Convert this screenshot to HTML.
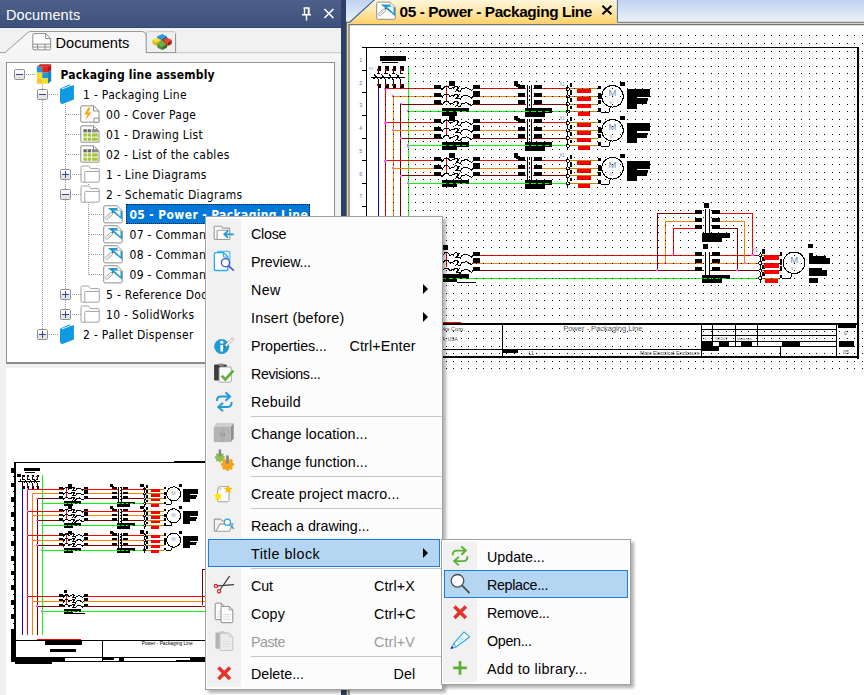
<!DOCTYPE html>
<html lang="en">
<head>
<meta charset="utf-8">
<title>Documents - 05 - Power - Packaging Line</title>
<style>
*{box-sizing:border-box;margin:0;padding:0}
html,body{width:864px;height:695px;overflow:hidden;background:#fff}
body{position:relative;font-family:"Liberation Sans",sans-serif;color:#000}
.abs{position:absolute}
/* ---------- left panel ---------- */
#left{left:0;top:0;width:341px;height:695px;background:#f0f0f0;overflow:hidden}
#ltitle{left:0;top:0;width:341px;height:28px;background:linear-gradient(#4e608a,#3e517b 96%,#314772 97%);color:#fff;font-size:14.5px;line-height:31.2px;padding-left:6px;letter-spacing:0.1px}
#ltabs{left:0;top:28px;width:341px;height:34px;background:#f1f1f1}
#tree{left:6px;top:62px;width:329px;height:302px;background:#fff;border:1px solid #8e9096;border-bottom:2px solid #8c8c8c;overflow:hidden}
#prev{left:6px;top:368px;width:335px;height:327px;background:#fff}
.trow{position:absolute;height:20px;line-height:20px;font-size:12px;letter-spacing:.31px;white-space:nowrap;font-family:"DejaVu Sans Condensed","Liberation Sans",sans-serif}
.trow b{font-weight:bold}
.trow.root{letter-spacing:.2px}
.exp{position:absolute;width:11px;height:11px;border:1px solid #8f8f8f;border-radius:1.5px;background:linear-gradient(#fdfdfd 0,#f4f4f4 45%,#e6e6e6 55%,#e2e2e2 100%)}
.exp i{position:absolute;left:1px;top:4px;width:7px;height:1px;background:#33449a}
.exp.p u{position:absolute;left:4px;top:1px;width:1px;height:7px;background:#33449a}
.vd{position:absolute;width:1px;background-image:linear-gradient(#9a9a9a 50%,transparent 50%);background-size:1px 2px}
.hd{position:absolute;height:1px;background-image:linear-gradient(90deg,#9a9a9a 50%,transparent 50%);background-size:2px 1px}
/* ---------- splitter ---------- */
#split{left:341px;top:0;width:5px;height:695px;background:#2f4068}
/* ---------- right panel ---------- */
#right{left:346px;top:0;width:518px;height:695px;background:#fff;overflow:hidden}
#rtabbar{left:0;top:0;width:518px;height:23px;background:linear-gradient(#c0d2f0,#eef3fb)}
#dtabtxt{left:53.5px;top:0;height:23px;line-height:24px;font-size:15.4px;letter-spacing:-.41px;font-weight:bold;white-space:nowrap}
/* ---------- menus ---------- */
.menu{position:absolute;background:#fcfcfc;border:1px solid #a0a0a0;box-shadow:3px 3px 3px rgba(0,0,0,.3);font-size:14.3px}
.menu .strip{position:absolute;left:1px;top:2px;bottom:2px;width:35px;background:#f1f1f1}
.mi{position:absolute;left:2px;right:2px;height:28px;line-height:30px;white-space:nowrap}
.mi span.t{position:absolute;left:43px;top:0}
.mi span.k{position:absolute;top:0;letter-spacing:.15px}
.mi.dis{color:#9a9a9a}
.mi.hl{background:#b5d6f3;border:1px solid #1d7fdb;line-height:28px}
.mi.hl span.t{left:42px}
.sep{position:absolute;left:45px;right:0;height:1px;background:#c6c6c6}
.arr{position:absolute;width:0;height:0;border-left:5.5px solid #000;border-top:5px solid transparent;border-bottom:5px solid transparent}
.ic{position:absolute;left:0;top:0}
</style>
</head>
<body>
<!-- ================= RIGHT PANEL (document) ================= -->
<div id="right" class="abs">
<svg class="abs" style="left:-346px;top:0" width="864" height="695" viewBox="0 0 864 695" font-family="Liberation Sans, sans-serif" shape-rendering="crispEdges"><path fill="#000" d="M362 47h497v1h-497zM366 47h1v311h-1zM857 47h2v312h-2zM366 356h493v2h-493zM362 70h5v1h-5zM362 92h5v1h-5zM362 115h5v1h-5zM362 138h5v1h-5zM362 160h5v1h-5zM362 183h5v1h-5zM362 206h5v1h-5zM362 229h5v1h-5zM362 251h5v1h-5zM362 274h5v1h-5zM362 297h5v1h-5zM362 319h5v1h-5zM362 342h5v1h-5zM367 323h492v2h-492zM502 324h1v33h-1zM367 349h335v1h-335zM701 324h1v23h-1zM712 324h1v23h-1zM735 324h1v23h-1zM757 324h1v23h-1zM701 347h1v10h-1zM836 324h1v33h-1zM780 347h1v10h-1zM702 329h134v1h-134zM702 335h134v1h-134zM702 341h134v1h-134zM702 346h134v1h-134zM702 341h10v6h-10zM719 341h10v6h-10zM741 341h11v6h-11zM782 341h18v6h-18zM702 347h17v4h-17zM838 325h18v3h-18zM839 341h15v6h-15zM503 350h15v3h-15z"/><path fill="#ff0000" d="M442 322h19v1h-19z"/><path fill="#0000ff" d="M378 88h1v228h-1z"/><path fill="#ff0000" d="M385 89h1v227h-1z"/><path fill="#ff8000" d="M393 96h1v220h-1z"/><path fill="#800000" d="M400 104h1v212h-1z"/><path fill="#00ff00" d="M408 66h1v250h-1z"/><path fill="#ff0000" d="M386 88h182v1h-182z"/><path fill="#ff8000" d="M393 96h175v1h-175z"/><path fill="#800000" d="M401 104h167v1h-167z"/><path fill="#00ff00" d="M408 111h160v1h-160z"/><path fill="#ff0000" d="M386 122h182v1h-182z"/><path fill="#ff8000" d="M393 130h175v1h-175z"/><path fill="#800000" d="M401 138h167v1h-167z"/><path fill="#00ff00" d="M408 145h160v1h-160z"/><path fill="#ff0000" d="M386 160h182v1h-182z"/><path fill="#ff8000" d="M393 168h175v1h-175z"/><path fill="#800000" d="M401 175h167v1h-167z"/><path fill="#00ff00" d="M408 183h160v1h-160z"/><path fill="#ff0000" d="M386 255h374v1h-374z"/><path fill="#ff8000" d="M393 263h367v1h-367z"/><path fill="#800000" d="M401 270h359v1h-359z"/><path fill="#00ff00" d="M408 278h352v1h-352z"/><path fill="#800000" d="M658 213h42v1h-42zM657 213h1v58h-1z"/><path fill="#ff8000" d="M665 221h35v1h-35zM665 221h1v42h-1z"/><path fill="#ff0000" d="M673 228h27v1h-27zM673 229h1v26h-1zM715 213h38v1h-38zM752 213h1v42h-1z"/><path fill="#ff8000" d="M715 221h30v1h-30zM744 221h1v42h-1z"/><path fill="#800000" d="M715 228h23v1h-23zM737 229h1v42h-1z"/><path fill="#000" d="M380 56h26v5h-26zM382 62h16v1h-16zM378 66h3v5h-3zM378 84h3v4h-3z"/><path fill="#b40000" d="M377 69h2v2h-2zM377 84h2v2h-2z"/><path fill="#000" d="M385 66h4v5h-4zM385 84h4v4h-4z"/><path fill="#b40000" d="M385 69h2v2h-2zM385 84h2v2h-2z"/><path fill="#000" d="M393 66h3v5h-3zM393 84h3v4h-3z"/><path fill="#b40000" d="M392 69h2v2h-2zM392 84h2v2h-2z"/><path fill="#000" d="M400 66h4v5h-4zM400 84h4v4h-4z"/><path fill="#b40000" d="M400 69h2v2h-2zM400 84h2v2h-2z"/><path fill="#000" d="M371 77h34v1h-34z"/><path fill="#fff" d="M441 88h32v17h-32z"/><path fill="#000" d="M434 85h7v4h-7zM434 93h7v4h-7zM434 100h7v4h-7zM449 81h6v5h-6zM473 85h7v4h-7zM473 91h7v6h-7zM473 100h7v4h-7zM442 108h27v4h-27zM442 112h15v4h-15zM518 85h7v4h-7zM534 85h8v4h-8zM518 93h7v4h-7zM534 93h8v4h-8zM518 100h7v4h-7zM534 100h8v4h-8zM514 81h4v5h-4zM516 84h4v3h-4z"/><path fill="#fff" d="M526 85h7v23h-7z"/><path fill="#000" d="M527 85h1v23h-1zM531 85h1v23h-1zM525 108h27v5h-27zM525 113h20v4h-20zM567 85h1v31h-1zM570 83h2v4h-2zM570 90h2v5h-2zM570 98h2v4h-2zM570 106h2v3h-2z"/><path fill="#b8860b" d="M569 88h29v1h-29zM569 96h29v1h-29zM569 104h29v1h-29zM569 111h29v1h-29z"/><path fill="#ff0000" d="M577 89h14v4h-14zM577 97h14v4h-14zM577 104h14v4h-14zM578 112h12v4h-12z"/><path fill="#000" d="M598 86h3v3h-3zM598 93h3v6h-3zM598 100h3v4h-3zM598 108h3v4h-3zM601 112h8v1h-8zM620 82h5v4h-5zM627 89h10v20h-10zM627 89h23v8h-23zM647 90h3v5h-3zM627 100h20v4h-20zM635 98h13v3h-13z"/><path fill="#fff" d="M441 122h32v17h-32z"/><path fill="#000" d="M434 119h7v4h-7zM434 127h7v4h-7zM434 134h7v4h-7zM449 116h6v5h-6zM473 119h7v4h-7zM473 125h7v6h-7zM473 134h7v4h-7zM442 142h27v5h-27zM442 147h15v3h-15zM518 119h7v4h-7zM534 119h8v4h-8zM518 127h7v4h-7zM534 127h8v4h-8zM518 134h7v4h-7zM534 134h8v4h-8zM514 116h4v4h-4zM516 118h4v3h-4z"/><path fill="#fff" d="M526 119h7v23h-7z"/><path fill="#000" d="M527 119h1v23h-1zM531 119h1v23h-1zM525 142h27v5h-27zM525 147h20v4h-20zM567 119h1v31h-1zM570 117h2v4h-2zM570 125h2v4h-2zM570 132h2v4h-2zM570 140h2v3h-2z"/><path fill="#b8860b" d="M569 122h29v1h-29zM569 130h29v1h-29zM569 138h29v1h-29zM569 145h29v1h-29z"/><path fill="#ff0000" d="M577 123h14v4h-14zM577 131h14v4h-14zM577 138h14v4h-14zM578 146h12v4h-12z"/><path fill="#000" d="M598 120h3v3h-3zM598 127h3v6h-3zM598 134h3v4h-3zM598 142h3v4h-3zM601 146h8v1h-8zM620 116h5v4h-5zM627 123h10v20h-10zM627 123h23v8h-23zM647 124h3v6h-3zM627 134h20v4h-20zM635 133h13v2h-13z"/><path fill="#fff" d="M441 160h32v17h-32z"/><path fill="#000" d="M434 157h7v4h-7zM434 165h7v4h-7zM434 172h7v4h-7zM449 153h6v5h-6zM473 157h7v4h-7zM473 163h7v6h-7zM473 172h7v4h-7zM442 180h27v4h-27zM442 184h15v3h-15zM518 157h7v4h-7zM534 157h8v4h-8zM518 165h7v4h-7zM534 165h8v4h-8zM518 172h7v4h-7zM534 172h8v4h-8zM514 153h4v5h-4zM516 156h4v3h-4z"/><path fill="#fff" d="M526 157h7v23h-7z"/><path fill="#000" d="M527 157h1v23h-1zM531 157h1v23h-1zM525 180h27v5h-27zM525 185h20v4h-20zM567 157h1v31h-1zM570 155h2v4h-2zM570 162h2v5h-2zM570 170h2v4h-2zM570 178h2v3h-2z"/><path fill="#b8860b" d="M569 160h29v1h-29zM569 168h29v1h-29zM569 175h29v1h-29zM569 183h29v1h-29z"/><path fill="#ff0000" d="M577 161h14v4h-14zM577 169h14v4h-14zM577 176h14v4h-14zM578 184h12v4h-12z"/><path fill="#000" d="M598 158h3v3h-3zM598 165h3v6h-3zM598 172h3v4h-3zM598 180h3v4h-3zM601 184h8v1h-8zM620 154h5v4h-5zM627 161h10v20h-10zM627 161h23v8h-23zM647 162h3v5h-3zM627 172h20v4h-20zM635 170h13v3h-13z"/><path fill="#fff" d="M441 254h32v18h-32z"/><path fill="#000" d="M434 252h7v4h-7zM434 259h7v4h-7zM434 267h7v4h-7zM443 245h5v5h-5zM473 252h7v4h-7zM473 258h7v5h-7zM473 267h7v4h-7zM442 274h27v5h-27zM442 279h15v3h-15zM457 282h19v1h-19zM695 210h7v4h-7zM712 210h8v4h-8zM695 218h7v4h-7zM712 218h8v4h-8zM695 225h7v4h-7zM712 225h8v4h-8zM704 203h5v5h-5z"/><path fill="#fff" d="M704 209h6v24h-6z"/><path fill="#000" d="M705 209h1v24h-1zM709 209h1v24h-1zM702 233h28v5h-28zM702 238h20v4h-20zM695 252h7v4h-7zM712 252h8v4h-8zM695 259h7v4h-7zM712 259h8v4h-8zM695 267h7v4h-7zM712 267h8v4h-8zM703 244h5v5h-5z"/><path fill="#fff" d="M704 252h6v23h-6z"/><path fill="#000" d="M705 252h1v23h-1zM709 252h1v23h-1zM702 275h28v4h-28zM702 279h20v4h-20zM760 252h1v31h-1zM762 249h3v5h-3zM762 257h3v4h-3zM762 265h3v4h-3zM762 272h3v4h-3z"/><path fill="#b8860b" d="M762 255h18v1h-18zM762 263h18v1h-18zM762 270h18v1h-18zM762 278h18v1h-18z"/><path fill="#ff0000" d="M764 255h15v5h-15zM764 263h15v5h-15zM764 270h15v4h-15zM765 279h13v4h-13z"/><path fill="#000" d="M780 252h2v4h-2zM780 259h2v6h-2zM780 266h2v5h-2zM780 275h2v3h-2zM782 278h9v1h-9zM808 244h5v4h-5zM809 253h4v11h-4zM812 256h14v8h-14zM821 258h9v6h-9zM809 268h13v8h-13zM817 270h10v6h-10zM809 278h9v5h-9z"/><path fill="#00ff00" d="M442 111h4v1h-4zM449 111h4v1h-4zM456 111h4v1h-4zM462 111h4v1h-4zM442 145h4v1h-4zM449 145h4v1h-4zM456 145h4v1h-4zM462 145h4v1h-4zM442 183h4v1h-4zM449 183h4v1h-4zM456 183h4v1h-4zM462 183h4v1h-4zM442 278h4v1h-4zM449 278h4v1h-4zM456 278h4v1h-4zM462 278h4v1h-4zM525 111h4v1h-4zM531 111h5v1h-5zM538 111h4v1h-4zM545 111h4v1h-4zM525 145h4v1h-4zM531 145h5v1h-5zM538 145h4v1h-4zM545 145h4v1h-4zM525 183h4v1h-4zM531 183h5v1h-5zM538 183h4v1h-4zM545 183h4v1h-4zM702 278h5v1h-5zM709 278h4v1h-4zM716 278h4v1h-4zM722 278h4v1h-4z"/><path fill="#ff0000" d="M446 85h1v17h-1zM446 119h1v17h-1zM446 157h1v17h-1zM446 253h1v14h-1z"/><path fill="#000" d="M378 71h1v3h-1zM377 73h3v1h-3zM378 80h1v4h-1zM385 71h1v3h-1zM384 73h4v1h-4zM385 80h1v4h-1zM393 71h1v3h-1zM392 73h3v1h-3zM393 80h1v4h-1zM400 71h1v3h-1zM400 73h3v1h-3zM400 80h1v4h-1z"/><path fill="#ff66ff" d="M384 88h3v2h-3zM392 95h2v2h-2zM400 103h2v2h-2zM407 110h2v2h-2zM384 122h3v2h-3zM392 129h2v2h-2zM400 137h2v2h-2zM407 144h2v3h-2zM384 160h3v2h-3zM392 167h2v2h-2zM400 175h2v2h-2zM407 182h2v2h-2zM384 254h3v2h-3zM392 262h2v2h-2zM400 269h2v2h-2zM407 277h2v2h-2zM656 269h2v2h-2zM664 262h2v2h-2zM672 254h2v2h-2zM751 254h3v2h-3zM744 262h2v2h-2zM736 269h2v2h-2z"/><polyline points="441.1,87.7 442.1,89.8 443.7,87.7 444.8,86.4 448.1,86.4 450.0,89.2 451.6,88.2 454.2,87.6 455.1,86.4 457.1,86.4 457.8,88.6 455.5,91.7" fill="none" stroke="#000" stroke-width="1"/><polyline points="459.4,86.4 457.1,90.5 460.6,91.7 461.4,88.9 466.6,87.6 471.6,90.5 473.0,88.9" fill="none" stroke="#000" stroke-width="1"/><polyline points="441.1,95.3 442.1,97.4 443.7,95.3 444.8,94.0 448.1,94.0 450.0,96.8 451.6,95.8 454.2,95.2 455.1,94.0 457.1,94.0 457.8,96.2 455.5,99.3" fill="none" stroke="#000" stroke-width="1"/><polyline points="459.4,94.0 457.1,98.1 460.6,99.3 461.4,96.5 466.6,95.2 471.6,98.1 473.0,96.5" fill="none" stroke="#000" stroke-width="1"/><polyline points="441.1,102.8 442.1,104.9 443.7,102.8 444.8,101.5 448.1,101.5 450.0,104.3 451.6,103.3 454.2,102.7 455.1,101.5 457.1,101.5 457.8,103.7 455.5,106.8" fill="none" stroke="#000" stroke-width="1"/><polyline points="459.4,101.5 457.1,105.6 460.6,106.8 461.4,104.0 466.6,102.7 471.6,105.6 473.0,104.0" fill="none" stroke="#000" stroke-width="1"/><polyline points="441.1,121.8 442.1,123.9 443.7,121.8 444.8,120.5 448.1,120.5 450.0,123.3 451.6,122.3 454.2,121.7 455.1,120.5 457.1,120.5 457.8,122.7 455.5,125.8" fill="none" stroke="#000" stroke-width="1"/><polyline points="459.4,120.5 457.1,124.6 460.6,125.8 461.4,123.0 466.6,121.7 471.6,124.6 473.0,123.0" fill="none" stroke="#000" stroke-width="1"/><polyline points="441.1,129.3 442.1,131.4 443.7,129.3 444.8,128.0 448.1,128.0 450.0,130.8 451.6,129.8 454.2,129.2 455.1,128.0 457.1,128.0 457.8,130.2 455.5,133.3" fill="none" stroke="#000" stroke-width="1"/><polyline points="459.4,128.0 457.1,132.1 460.6,133.3 461.4,130.5 466.6,129.2 471.6,132.1 473.0,130.5" fill="none" stroke="#000" stroke-width="1"/><polyline points="441.1,136.9 442.1,139.0 443.7,136.9 444.8,135.6 448.1,135.6 450.0,138.4 451.6,137.4 454.2,136.8 455.1,135.6 457.1,135.6 457.8,137.8 455.5,140.9" fill="none" stroke="#000" stroke-width="1"/><polyline points="459.4,135.6 457.1,139.7 460.6,140.9 461.4,138.1 466.6,136.8 471.6,139.7 473.0,138.1" fill="none" stroke="#000" stroke-width="1"/><polyline points="441.1,159.6 442.1,161.7 443.7,159.6 444.8,158.3 448.1,158.3 450.0,161.1 451.6,160.1 454.2,159.5 455.1,158.3 457.1,158.3 457.8,160.5 455.5,163.6" fill="none" stroke="#000" stroke-width="1"/><polyline points="459.4,158.3 457.1,162.4 460.6,163.6 461.4,160.8 466.6,159.5 471.6,162.4 473.0,160.8" fill="none" stroke="#000" stroke-width="1"/><polyline points="441.1,167.2 442.1,169.3 443.7,167.2 444.8,165.9 448.1,165.9 450.0,168.7 451.6,167.7 454.2,167.1 455.1,165.9 457.1,165.9 457.8,168.1 455.5,171.2" fill="none" stroke="#000" stroke-width="1"/><polyline points="459.4,165.9 457.1,170.0 460.6,171.2 461.4,168.4 466.6,167.1 471.6,170.0 473.0,168.4" fill="none" stroke="#000" stroke-width="1"/><polyline points="441.1,174.7 442.1,176.8 443.7,174.7 444.8,173.4 448.1,173.4 450.0,176.2 451.6,175.2 454.2,174.6 455.1,173.4 457.1,173.4 457.8,175.6 455.5,178.7" fill="none" stroke="#000" stroke-width="1"/><polyline points="459.4,173.4 457.1,177.5 460.6,178.7 461.4,175.9 466.6,174.6 471.6,177.5 473.0,175.9" fill="none" stroke="#000" stroke-width="1"/><polyline points="441.1,254.2 442.1,256.3 443.7,254.2 444.8,252.9 448.1,252.9 450.0,255.7 451.6,254.7 454.2,254.1 455.1,252.9 457.1,252.9 457.8,255.1 455.5,258.2" fill="none" stroke="#000" stroke-width="1"/><polyline points="459.4,252.9 457.1,257.0 460.6,258.2 461.4,255.4 466.6,254.1 471.6,257.0 473.0,255.4" fill="none" stroke="#000" stroke-width="1"/><polyline points="441.1,261.8 442.1,263.9 443.7,261.8 444.8,260.5 448.1,260.5 450.0,263.3 451.6,262.3 454.2,261.7 455.1,260.5 457.1,260.5 457.8,262.7 455.5,265.8" fill="none" stroke="#000" stroke-width="1"/><polyline points="459.4,260.5 457.1,264.6 460.6,265.8 461.4,263.0 466.6,261.7 471.6,264.6 473.0,263.0" fill="none" stroke="#000" stroke-width="1"/><polyline points="441.1,269.4 442.1,271.5 443.7,269.4 444.8,268.1 448.1,268.1 450.0,270.9 451.6,269.9 454.2,269.3 455.1,268.1 457.1,268.1 457.8,270.3 455.5,273.4" fill="none" stroke="#000" stroke-width="1"/><polyline points="459.4,268.1 457.1,272.2 460.6,273.4 461.4,270.6 466.6,269.3 471.6,272.2 473.0,270.6" fill="none" stroke="#000" stroke-width="1"/><polyline points="374.0,74.0 379.0,80.6" fill="none" stroke="#000" stroke-width="1"/><polyline points="373.8,78.8 376.2,75.4" fill="none" stroke="#000" stroke-width="1"/><polyline points="381.1,74.0 386.1,80.6" fill="none" stroke="#000" stroke-width="1"/><polyline points="380.9,78.8 383.3,75.4" fill="none" stroke="#000" stroke-width="1"/><polyline points="388.9,74.0 393.9,80.6" fill="none" stroke="#000" stroke-width="1"/><polyline points="388.7,78.8 391.1,75.4" fill="none" stroke="#000" stroke-width="1"/><polyline points="396.2,74.0 401.2,80.6" fill="none" stroke="#000" stroke-width="1"/><polyline points="396.0,78.8 398.4,75.4" fill="none" stroke="#000" stroke-width="1"/><line x1="529.9" y1="85.9" x2="529.9" y2="107.6" stroke="#000" stroke-width="1" stroke-dasharray="2.0 2.5"/><line x1="529.9" y1="120.0" x2="529.9" y2="141.7" stroke="#000" stroke-width="1" stroke-dasharray="2.0 2.5"/><line x1="529.9" y1="157.8" x2="529.9" y2="179.5" stroke="#000" stroke-width="1" stroke-dasharray="2.0 2.5"/><circle cx="567.8" cy="88.9" r="1.6" fill="#fff" stroke="#000" stroke-width="1"/><circle cx="567.8" cy="96.5" r="1.6" fill="#fff" stroke="#000" stroke-width="1"/><circle cx="567.8" cy="104.0" r="1.6" fill="#fff" stroke="#000" stroke-width="1"/><circle cx="567.8" cy="111.6" r="1.6" fill="#fff" stroke="#000" stroke-width="1"/><text x="559.3" y="85.5" font-size="4.6" fill="#6f8fb8" text-anchor="start" font-weight="normal">X1</text><circle cx="612.5" cy="96.3" r="10.8" fill="#fff" stroke="#000" stroke-width="1"/><polyline points="609.0,112.1 610.5,106.3" fill="none" stroke="#000" stroke-width="1"/><text x="612.5" y="96.3" font-size="9.5" fill="#6f8fb8" text-anchor="middle" font-weight="normal">M</text><text x="611.9" y="103.9" font-size="4.2" fill="#6f8fb8" text-anchor="middle" font-weight="normal">3~</text><circle cx="567.8" cy="123.0" r="1.6" fill="#fff" stroke="#000" stroke-width="1"/><circle cx="567.8" cy="130.5" r="1.6" fill="#fff" stroke="#000" stroke-width="1"/><circle cx="567.8" cy="138.1" r="1.6" fill="#fff" stroke="#000" stroke-width="1"/><circle cx="567.8" cy="145.7" r="1.6" fill="#fff" stroke="#000" stroke-width="1"/><text x="559.3" y="119.6" font-size="4.6" fill="#6f8fb8" text-anchor="start" font-weight="normal">X1</text><circle cx="612.5" cy="130.3" r="10.8" fill="#fff" stroke="#000" stroke-width="1"/><polyline points="609.0,146.2 610.5,140.4" fill="none" stroke="#000" stroke-width="1"/><text x="612.5" y="130.3" font-size="9.5" fill="#6f8fb8" text-anchor="middle" font-weight="normal">M</text><text x="611.9" y="137.9" font-size="4.2" fill="#6f8fb8" text-anchor="middle" font-weight="normal">3~</text><circle cx="567.8" cy="160.8" r="1.6" fill="#fff" stroke="#000" stroke-width="1"/><circle cx="567.8" cy="168.4" r="1.6" fill="#fff" stroke="#000" stroke-width="1"/><circle cx="567.8" cy="175.9" r="1.6" fill="#fff" stroke="#000" stroke-width="1"/><circle cx="567.8" cy="183.5" r="1.6" fill="#fff" stroke="#000" stroke-width="1"/><text x="559.3" y="157.4" font-size="4.6" fill="#6f8fb8" text-anchor="start" font-weight="normal">X1</text><circle cx="612.5" cy="168.2" r="10.8" fill="#fff" stroke="#000" stroke-width="1"/><polyline points="609.0,184.0 610.5,178.2" fill="none" stroke="#000" stroke-width="1"/><text x="612.5" y="168.2" font-size="9.5" fill="#6f8fb8" text-anchor="middle" font-weight="normal">M</text><text x="611.9" y="175.8" font-size="4.2" fill="#6f8fb8" text-anchor="middle" font-weight="normal">3~</text><circle cx="760.4" cy="255.4" r="1.6" fill="#fff" stroke="#000" stroke-width="1"/><circle cx="760.4" cy="263.0" r="1.6" fill="#fff" stroke="#000" stroke-width="1"/><circle cx="760.4" cy="270.6" r="1.6" fill="#fff" stroke="#000" stroke-width="1"/><circle cx="760.4" cy="278.1" r="1.6" fill="#fff" stroke="#000" stroke-width="1"/><text x="751.9" y="252.0" font-size="4.6" fill="#6f8fb8" text-anchor="start" font-weight="normal">X1</text><circle cx="794.1" cy="262.8" r="10.8" fill="#fff" stroke="#000" stroke-width="1"/><polyline points="790.6,278.6 792.1,272.9" fill="none" stroke="#000" stroke-width="1"/><text x="794.1" y="262.8" font-size="9.5" fill="#6f8fb8" text-anchor="middle" font-weight="normal">M</text><text x="793.5" y="270.4" font-size="4.2" fill="#6f8fb8" text-anchor="middle" font-weight="normal">3~</text><text x="360.8" y="62.0" font-size="5.2" fill="#5c74a8" text-anchor="middle" font-weight="normal">1</text><text x="360.8" y="84.7" font-size="5.2" fill="#5c74a8" text-anchor="middle" font-weight="normal">2</text><text x="360.8" y="107.4" font-size="5.2" fill="#5c74a8" text-anchor="middle" font-weight="normal">3</text><text x="360.8" y="130.1" font-size="5.2" fill="#5c74a8" text-anchor="middle" font-weight="normal">4</text><text x="360.8" y="152.8" font-size="5.2" fill="#5c74a8" text-anchor="middle" font-weight="normal">5</text><text x="360.8" y="175.6" font-size="5.2" fill="#5c74a8" text-anchor="middle" font-weight="normal">6</text><text x="360.8" y="198.3" font-size="5.2" fill="#5c74a8" text-anchor="middle" font-weight="normal">7</text><text x="360.8" y="221.0" font-size="5.2" fill="#5c74a8" text-anchor="middle" font-weight="normal">8</text><text x="360.8" y="243.7" font-size="5.2" fill="#5c74a8" text-anchor="middle" font-weight="normal">9</text><text x="360.8" y="266.4" font-size="5.2" fill="#5c74a8" text-anchor="middle" font-weight="normal">10</text><text x="360.8" y="289.1" font-size="5.2" fill="#5c74a8" text-anchor="middle" font-weight="normal">11</text><text x="360.8" y="311.8" font-size="5.2" fill="#5c74a8" text-anchor="middle" font-weight="normal">12</text><text x="360.8" y="334.5" font-size="5.2" fill="#5c74a8" text-anchor="middle" font-weight="normal">13</text><text x="369.0" y="69.6" font-size="3.6" fill="#6f8fb8" text-anchor="start" font-weight="normal">F1</text><text x="563.2" y="331.0" font-size="7.4" fill="#555" text-anchor="start" font-weight="normal" textLength="79.2" lengthAdjust="spacingAndGlyphs">Power - Packaging Line</text><text x="640.0" y="354.8" font-size="5.2" fill="#444" text-anchor="start" font-weight="normal" textLength="59.6" lengthAdjust="spacingAndGlyphs">Main Electrical Enclosure</text><text x="528.4" y="355.0" font-size="5.0" fill="#444" text-anchor="start" font-weight="normal">L1</text><text x="442.0" y="330.6" font-size="5.6" fill="#444" text-anchor="start" font-weight="normal">rks Corp.</text><text x="442.0" y="340.6" font-size="4.8" fill="#444" text-anchor="start" font-weight="normal">A, USA</text><text x="845.5" y="335.0" font-size="5.6" fill="#555" text-anchor="middle" font-weight="normal">0</text><text x="846.0" y="353.6" font-size="5.6" fill="#555" text-anchor="middle" font-weight="normal">05</text><text x="704.5" y="340.2" font-size="3.2" fill="#667" text-anchor="start" font-weight="normal">0</text><text x="714.0" y="340.2" font-size="3.0" fill="#667" text-anchor="start" font-weight="normal">7/18/2022</text><text x="737.0" y="340.2" font-size="3.0" fill="#667" text-anchor="start" font-weight="normal">nfauvarque</text><g shape-rendering="crispEdges"><defs><path id="dr" d="M385 .5h1M393 .5h1M400 .5h1M408 .5h1M415 .5h1M423 .5h1M430 .5h1M438 .5h1M446 .5h1M453 .5h1M461 .5h1M468 .5h1M476 .5h1M483 .5h1M491 .5h1M499 .5h1M506 .5h1M514 .5h1M521 .5h1M529 .5h1M536 .5h1M544 .5h1M552 .5h1M559 .5h1M567 .5h1M574 .5h1M582 .5h1M589 .5h1M597 .5h1M605 .5h1M612 .5h1M620 .5h1M627 .5h1M635 .5h1M642 .5h1M650 .5h1M658 .5h1M665 .5h1M673 .5h1M680 .5h1M688 .5h1M695 .5h1M703 .5h1M711 .5h1M718 .5h1M726 .5h1M733 .5h1M741 .5h1M748 .5h1M756 .5h1M764 .5h1M771 .5h1M779 .5h1M786 .5h1M794 .5h1M801 .5h1M809 .5h1M816 .5h1M824 .5h1M832 .5h1M839 .5h1M847 .5h1M854 .5h1M862 .5h1" stroke="#000" stroke-width="1" fill="none"/></defs><use href="#dr" y="35"/><use href="#dr" y="43"/><use href="#dr" y="51"/><use href="#dr" y="58"/><use href="#dr" y="66"/><use href="#dr" y="73"/><use href="#dr" y="81"/><use href="#dr" y="88"/><use href="#dr" y="96"/><use href="#dr" y="104"/><use href="#dr" y="111"/><use href="#dr" y="119"/><use href="#dr" y="126"/><use href="#dr" y="134"/><use href="#dr" y="141"/><use href="#dr" y="149"/><use href="#dr" y="157"/><use href="#dr" y="164"/><use href="#dr" y="172"/><use href="#dr" y="179"/><use href="#dr" y="187"/><use href="#dr" y="194"/><use href="#dr" y="202"/><use href="#dr" y="210"/><use href="#dr" y="217"/><use href="#dr" y="225"/><use href="#dr" y="232"/><use href="#dr" y="240"/><use href="#dr" y="247"/><use href="#dr" y="255"/><use href="#dr" y="263"/><use href="#dr" y="270"/><use href="#dr" y="278"/><use href="#dr" y="285"/><use href="#dr" y="293"/><use href="#dr" y="300"/><use href="#dr" y="308"/><use href="#dr" y="315"/><use href="#dr" y="323"/><use href="#dr" y="331"/><use href="#dr" y="338"/><use href="#dr" y="346"/><use href="#dr" y="353"/><use href="#dr" y="361"/><use href="#dr" y="368"/></g></svg>
<div id="rtabbar" class="abs"></div>
<svg class="abs" style="left:0;top:0" width="518" height="695" viewBox="346 0 518 695"><defs><linearGradient id="tg" gradientUnits="userSpaceOnUse" x1="0" y1="0" x2="0" y2="23"><stop offset="0" stop-color="#fff6dc"/><stop offset=".45" stop-color="#ffe8ae"/><stop offset="1" stop-color="#ffd36e"/></linearGradient></defs><path d="M346.7 22.6 H350 L374.6 0 H617 V22.6 H864 V24 H346.7Z" fill="url(#tg)"/><rect x="617.6" y="22.7" width="247" height="1.3" fill="#f6d680"/><rect x="346.7" y="22.6" width="1.6" height="673" fill="#fbd878"/><path d="M349 695 V24.6 H864" fill="none" stroke="#747474" stroke-width="1.4"/><path d="M346.3 695 V22.2 H349.8 L374.6 -0.3" stroke="#2f56a6" stroke-width="1.1" fill="none"/><path d="M617.4 0 V22.3 H864" stroke="#4a72bd" stroke-width="1" fill="none"/><g transform="translate(376.0,1.4)"><path d="M2.2 0.7 H14 L19.3 5.8 V16.4 Q19.3 17.9 17.8 17.9 H2.2 Q0.7 17.9 0.7 16.4 V2.2 Q0.7 0.7 2.2 0.7Z" fill="#fff" stroke="#8e8e8e" stroke-width="1"/><path d="M4.8 3.1 H14.6 L19 5.9 V14.6 Z M10.9 5.4 L17.5 11.6 V5.6Z" fill="#1e9ad6" fill-rule="evenodd"/><path d="M14 0.9 L19.1 5.8 L14.6 5.4 Z" fill="#fff" stroke="#b4b4b4" stroke-width=".7"/><rect x="-1.4" y="-4.3" width="2.8" height="8.6" rx="1.3" transform="translate(5.9,10.9) rotate(48)" fill="#fff" stroke="#a0a0a0" stroke-width=".9"/><path d="M4.4 12.2 L7.2 9.8" stroke="#b8b8b8" stroke-width=".8" fill="none"/><path d="M9 7.9 L10.2 6.8" stroke="#555" stroke-width="1.2" fill="none"/></g><path d="M602.4 5.8 L611.4 14.2 M611.4 5.8 L602.4 14.2" stroke="#000" stroke-width="1.9" fill="none"/></svg>
<div id="dtabtxt" class="abs">05 - Power - Packaging Line</div>
</div>
<div id="split" class="abs"></div>
<!-- ================= LEFT PANEL ================= -->
<div id="left" class="abs">
<div id="ltitle" class="abs">Documents</div>
<svg class="abs" style="left:298px;top:4px" width="40" height="20" viewBox="298 4 40 20"><path d="M303.5 8 H309.5 M304.5 8 V14.5 M308.5 8 V14.5 M309 8 V14.5 M302 14.7 H311 M306.5 15 V20.6" stroke="#fff" stroke-width="1.4" fill="none"/><path d="M324.4 9 L333.4 18 M333.4 9 L324.4 18" stroke="#fff" stroke-width="1.6" fill="none"/></svg>
<div id="ltabs" class="abs"><svg class="abs" style="left:0;top:0" width="341" height="34" viewBox="0 28 341 34"><rect x="0" y="53" width="341" height="9" fill="#f5f5f5"/><path d="M5 53 L28 32.9 Q29 32 30.5 32 H142 Q145.3 32 145.3 35 V54 H5Z" fill="#f6f6f6"/><path d="M146.2 34 Q146 31.8 148 31.8 H173.4 Q175.6 31.8 175.6 34 V52.8 H146.2Z" fill="#efefef"/><path d="M175.5 52.7 H341" stroke="#c2c2c2" stroke-width="1" fill="none"/><path d="M146.2 33.5 V52.6 H175.6 V33.5" fill="none" stroke="#8f8f8f" stroke-width="1"/><path d="M146.2 33.5 Q146.2 31.6 148 31.6 H173.6 Q175.6 31.6 175.6 33.5" fill="none" stroke="#c9c9c9" stroke-width="1"/><path d="M0 52.6 H5 L28 32.4 Q29 31.5 30.5 31.5 H142 Q145.6 31.5 146 35" fill="none" stroke="#9a9a9a" stroke-width="1"/></svg><svg class="abs" style="left:32px;top:5px" width="20" height="18" viewBox="0 0 20 18" ><path d="M2 0.6 H13.6 L18.6 5.6 V15.6 Q18.6 16.8 17.4 16.8 H2 Q0.8 16.8 0.8 15.6 V1.8 Q0.8 0.6 2 0.6Z" fill="#fff" stroke="#8c8c8c" stroke-width="1"/><path d="M13.6 0.6 V5.6 H18.6" fill="none" stroke="#8c8c8c" stroke-width="1"/><path d="M1 11.2 H18.4 M1 14 H18.4 M5.6 11.2 V16.6 M13 11.2 V16.6" fill="none" stroke="#8c8c8c" stroke-width="1"/></svg><svg class="abs" style="left:152px;top:4.6px" width="23" height="20" viewBox="0 0 23 20" ><g transform="scale(.88)"><polygon points="11.5,1 17,3.6 11.5,6.4 6,3.6" fill="#2d9be0"/><polygon points="6,3.6 11.5,6.4 11.5,10 6,7.4" fill="#1c78b8"/><polygon points="17,3.6 11.5,6.4 11.5,10 17,7.4" fill="#155f96"/><polygon points="5.8,5.4 11,8 5.8,10.8 0.6,8" fill="#f4df3c"/><polygon points="0.6,8 5.8,10.8 5.8,15 0.6,12.4" fill="#d8bf1c"/><polygon points="11,8 5.8,10.8 5.8,15 11,12.4" fill="#b89f10"/><polygon points="17.4,5.4 22.4,8 17.4,10.8 12.2,8" fill="#ee4438"/><polygon points="12.2,8 17.4,10.8 17.4,15 12.2,12.4" fill="#cf2a20"/><polygon points="22.4,8 17.4,10.8 17.4,15 22.4,12.4" fill="#a81c14"/><polygon points="11.6,9.6 17,12.4 11.6,15.2 6.2,12.4" fill="#68b040"/><polygon points="6.2,12.4 11.6,15.2 11.6,19.4 6.2,16.8" fill="#4d9030"/><polygon points="17,12.4 11.6,15.2 11.6,19.4 17,16.8" fill="#386f20"/></g></svg><div class="abs" style="left:55.5px;top:3.6px;font-size:14.6px;line-height:22px;white-space:nowrap">Documents</div></div>
<div id="tree" class="abs"><div class="vd" style="left:35px;top:21px;height:251px"></div><div class="vd" style="left:58px;top:41px;height:211px"></div><div class="vd" style="left:81px;top:121px;height:91px"></div><div class="hd" style="left:19px;top:11px;width:10px"></div><div class="hd" style="left:42px;top:31px;width:10px"></div><div class="hd" style="left:42px;top:271px;width:10px"></div><div class="hd" style="left:59px;top:51px;width:15px"></div><div class="hd" style="left:59px;top:71px;width:15px"></div><div class="hd" style="left:59px;top:91px;width:15px"></div><div class="hd" style="left:65px;top:111px;width:9px"></div><div class="hd" style="left:65px;top:131px;width:9px"></div><div class="hd" style="left:65px;top:231px;width:9px"></div><div class="hd" style="left:65px;top:251px;width:9px"></div><div class="hd" style="left:82px;top:151px;width:15px"></div><div class="hd" style="left:82px;top:171px;width:15px"></div><div class="hd" style="left:82px;top:191px;width:15px"></div><div class="hd" style="left:82px;top:211px;width:15px"></div><div class="exp" style="left:7px;top:6px"><i></i></div><svg class="abs" style="left:27px;top:2px" width="20" height="20" viewBox="0 0 20 20" overflow="visible"><polygon points="2.8,1.8 6,-0.7 17.2,-0.7 14,1.8" fill="#d81e1e"/><polygon points="14,1.8 17.2,-0.7 17.2,5 14,7.6" fill="#b0161a"/><polygon points="14,7.6 17.2,5 17.2,15.9 14,18.7" fill="#1583c6"/><rect x="2.8" y="1.8" width="5.4" height="5.8" fill="#1e9ad6"/><rect x="8.2" y="1.8" width="5.8" height="5.8" fill="#e2201c"/><rect x="2.8" y="7.6" width="5.4" height="5.7" fill="#f7df1e"/><rect x="8.2" y="7.6" width="5.8" height="5.7" fill="#1e9ad6"/><rect x="2.8" y="13.3" width="5.4" height="5.4" fill="#fbc531"/><rect x="8.2" y="13.3" width="5.8" height="5.4" fill="#f7df1e"/></svg><div class="trow root" style="left:53.5px;top:2px"><b>Packaging line assembly</b></div><div class="exp" style="left:30px;top:26px"><i></i></div><svg class="abs" style="left:50px;top:22px" width="20" height="20" viewBox="0 0 20 20" overflow="visible"><path d="M3 3.8 L12.6 -0.7 L13.2 0.9 L16.9 0.3 V14.6 L5.4 18.9 Q3 19.2 3 16.8 Z" fill="#0d9ae0"/><path d="M4.6 4.2 L13 0.9" stroke="#e8f6ff" stroke-width=".9" fill="none"/></svg><div class="trow" style="left:76px;top:22px">1 - Packaging Line</div><svg class="abs" style="left:73px;top:42px" width="20" height="20" viewBox="0 0 20 20" overflow="visible"><path d="M2 0.8 H13.5 L19 6 V17.2 H2 Q0.8 17.2 0.8 16 V2 Q0.8 0.8 2 0.8Z" fill="#fff" stroke="#8e8e8e" stroke-width="1"/><path d="M13.5 0.8 V6 H19" fill="none" stroke="#8e8e8e" stroke-width="1"/><path d="M14 13.2h5v4h-5z" fill="#fff" stroke="#8e8e8e" stroke-width="1"/><polygon points="8.2,2.6 4.2,9.6 7.4,9.6 5.4,15.2 11.6,7.4 8.4,7.4 10.6,2.6" fill="#f7a81c"/></svg><div class="trow" style="left:99px;top:42px">00 - Cover Page</div><svg class="abs" style="left:73px;top:62px" width="20" height="20" viewBox="0 0 20 20" overflow="visible"><path d="M2 0.8 H13.5 L19 6 V17.2 H2 Q0.8 17.2 0.8 16 V2 Q0.8 0.8 2 0.8Z" fill="#fff" stroke="#8e8e8e" stroke-width="1"/><path d="M13.5 0.8 V6 H19" fill="none" stroke="#8e8e8e" stroke-width="1"/><rect x="3.4" y="4.2" width="3.4" height="3.2" fill="#6b6b6b"/><rect x="7.6" y="4.2" width="3.4" height="3.2" fill="#6b6b6b"/><rect x="11.8" y="4.2" width="6" height="3.2" fill="#8a8a8a"/><rect x="3.4" y="8.4" width="3.4" height="3.2" fill="#a5c53a"/><rect x="7.6" y="8.4" width="3.4" height="3.2" fill="#a5c53a"/><rect x="11.8" y="8.4" width="6" height="3.2" fill="#a5c53a"/><rect x="3.4" y="12.6" width="3.4" height="3.2" fill="#a5c53a"/><rect x="7.6" y="12.6" width="3.4" height="3.2" fill="#a5c53a"/><rect x="11.8" y="12.6" width="6" height="3.2" fill="#a5c53a"/></svg><div class="trow" style="left:99px;top:62px">01 - Drawing List</div><svg class="abs" style="left:73px;top:82px" width="20" height="20" viewBox="0 0 20 20" overflow="visible"><path d="M2 0.8 H13.5 L19 6 V17.2 H2 Q0.8 17.2 0.8 16 V2 Q0.8 0.8 2 0.8Z" fill="#fff" stroke="#8e8e8e" stroke-width="1"/><path d="M13.5 0.8 V6 H19" fill="none" stroke="#8e8e8e" stroke-width="1"/><rect x="3.4" y="4.2" width="3.4" height="3.2" fill="#6b6b6b"/><rect x="7.6" y="4.2" width="3.4" height="3.2" fill="#6b6b6b"/><rect x="11.8" y="4.2" width="6" height="3.2" fill="#8a8a8a"/><rect x="3.4" y="8.4" width="3.4" height="3.2" fill="#a5c53a"/><rect x="7.6" y="8.4" width="3.4" height="3.2" fill="#a5c53a"/><rect x="11.8" y="8.4" width="6" height="3.2" fill="#a5c53a"/><rect x="3.4" y="12.6" width="3.4" height="3.2" fill="#a5c53a"/><rect x="7.6" y="12.6" width="3.4" height="3.2" fill="#a5c53a"/><rect x="11.8" y="12.6" width="6" height="3.2" fill="#a5c53a"/></svg><div class="trow" style="left:99px;top:82px">02 - List of the cables</div><div class="exp p" style="left:53px;top:106px"><i></i><u></u></div><svg class="abs" style="left:73px;top:102px" width="20" height="20" viewBox="0 0 20 20" overflow="visible"><path d="M1 2.4 Q1 1 2.4 1 H8.6 L10.6 3.6 H18 Q19.2 3.6 19.2 4.8 V16 Q19.2 17.2 18 17.2 H2.2 Q1 17.2 1 16Z" fill="#fff" stroke="#a3a3a3" stroke-width="1"/><path d="M4.8 17 V7.4 Q4.8 6.4 5.8 6.4 H19" fill="none" stroke="#a3a3a3" stroke-width="1"/></svg><div class="trow" style="left:99px;top:102px">1 - Line Diagrams</div><div class="exp" style="left:53px;top:126px"><i></i></div><svg class="abs" style="left:73px;top:122px" width="20" height="20" viewBox="0 0 20 20" overflow="visible"><path d="M1 2.4 Q1 1 2.4 1 H8.6 L10.6 3.6 H18 Q19.2 3.6 19.2 4.8 V16 Q19.2 17.2 18 17.2 H2.2 Q1 17.2 1 16Z" fill="#fff" stroke="#a3a3a3" stroke-width="1"/><path d="M4.8 17 V7.4 Q4.8 6.4 5.8 6.4 H19" fill="none" stroke="#a3a3a3" stroke-width="1"/></svg><div class="trow" style="left:99px;top:122px">2 - Schematic Diagrams</div><svg class="abs" style="left:96px;top:142px" width="20" height="20" viewBox="0 0 20 20" overflow="visible"><path d="M2.2 0.7 H14 L19.3 5.8 V16.4 Q19.3 17.9 17.8 17.9 H2.2 Q0.7 17.9 0.7 16.4 V2.2 Q0.7 0.7 2.2 0.7Z" fill="#fff" stroke="#8e8e8e" stroke-width="1"/><path d="M4.8 3.1 H14.6 L19 5.9 V14.6 Z M10.9 5.4 L17.5 11.6 V5.6Z" fill="#1e9ad6" fill-rule="evenodd"/><path d="M14 0.9 L19.1 5.8 L14.6 5.4 Z" fill="#fff" stroke="#b4b4b4" stroke-width=".7"/><rect x="-1.4" y="-4.3" width="2.8" height="8.6" rx="1.3" transform="translate(5.9,10.9) rotate(48)" fill="#fff" stroke="#a0a0a0" stroke-width=".9"/><path d="M4.4 12.2 L7.2 9.8" stroke="#b8b8b8" stroke-width=".8" fill="none"/><path d="M9 7.9 L10.2 6.8" stroke="#555" stroke-width="1.2" fill="none"/></svg><div class="trow" style="left:119px;top:141px;background:#0078d7;color:#fff;outline:1px dotted #10203c;outline-offset:-1px;padding:0 3px 0 3.5px;height:19.5px;line-height:22px;width:184px;overflow:hidden;letter-spacing:.36px"><b>05 - Power - Packaging Line</b></div><svg class="abs" style="left:96px;top:162px" width="20" height="20" viewBox="0 0 20 20" overflow="visible"><path d="M2.2 0.7 H14 L19.3 5.8 V16.4 Q19.3 17.9 17.8 17.9 H2.2 Q0.7 17.9 0.7 16.4 V2.2 Q0.7 0.7 2.2 0.7Z" fill="#fff" stroke="#8e8e8e" stroke-width="1"/><path d="M4.8 3.1 H14.6 L19 5.9 V14.6 Z M10.9 5.4 L17.5 11.6 V5.6Z" fill="#1e9ad6" fill-rule="evenodd"/><path d="M14 0.9 L19.1 5.8 L14.6 5.4 Z" fill="#fff" stroke="#b4b4b4" stroke-width=".7"/><rect x="-1.4" y="-4.3" width="2.8" height="8.6" rx="1.3" transform="translate(5.9,10.9) rotate(48)" fill="#fff" stroke="#a0a0a0" stroke-width=".9"/><path d="M4.4 12.2 L7.2 9.8" stroke="#b8b8b8" stroke-width=".8" fill="none"/><path d="M9 7.9 L10.2 6.8" stroke="#555" stroke-width="1.2" fill="none"/></svg><div class="trow" style="left:122.5px;top:162px">07 - Command</div><svg class="abs" style="left:96px;top:182px" width="20" height="20" viewBox="0 0 20 20" overflow="visible"><path d="M2.2 0.7 H14 L19.3 5.8 V16.4 Q19.3 17.9 17.8 17.9 H2.2 Q0.7 17.9 0.7 16.4 V2.2 Q0.7 0.7 2.2 0.7Z" fill="#fff" stroke="#8e8e8e" stroke-width="1"/><path d="M4.8 3.1 H14.6 L19 5.9 V14.6 Z M10.9 5.4 L17.5 11.6 V5.6Z" fill="#1e9ad6" fill-rule="evenodd"/><path d="M14 0.9 L19.1 5.8 L14.6 5.4 Z" fill="#fff" stroke="#b4b4b4" stroke-width=".7"/><rect x="-1.4" y="-4.3" width="2.8" height="8.6" rx="1.3" transform="translate(5.9,10.9) rotate(48)" fill="#fff" stroke="#a0a0a0" stroke-width=".9"/><path d="M4.4 12.2 L7.2 9.8" stroke="#b8b8b8" stroke-width=".8" fill="none"/><path d="M9 7.9 L10.2 6.8" stroke="#555" stroke-width="1.2" fill="none"/></svg><div class="trow" style="left:122.5px;top:182px">08 - Command</div><svg class="abs" style="left:96px;top:202px" width="20" height="20" viewBox="0 0 20 20" overflow="visible"><path d="M2.2 0.7 H14 L19.3 5.8 V16.4 Q19.3 17.9 17.8 17.9 H2.2 Q0.7 17.9 0.7 16.4 V2.2 Q0.7 0.7 2.2 0.7Z" fill="#fff" stroke="#8e8e8e" stroke-width="1"/><path d="M4.8 3.1 H14.6 L19 5.9 V14.6 Z M10.9 5.4 L17.5 11.6 V5.6Z" fill="#1e9ad6" fill-rule="evenodd"/><path d="M14 0.9 L19.1 5.8 L14.6 5.4 Z" fill="#fff" stroke="#b4b4b4" stroke-width=".7"/><rect x="-1.4" y="-4.3" width="2.8" height="8.6" rx="1.3" transform="translate(5.9,10.9) rotate(48)" fill="#fff" stroke="#a0a0a0" stroke-width=".9"/><path d="M4.4 12.2 L7.2 9.8" stroke="#b8b8b8" stroke-width=".8" fill="none"/><path d="M9 7.9 L10.2 6.8" stroke="#555" stroke-width="1.2" fill="none"/></svg><div class="trow" style="left:122.5px;top:202px">09 - Command</div><div class="exp p" style="left:53px;top:226px"><i></i><u></u></div><svg class="abs" style="left:73px;top:222px" width="20" height="20" viewBox="0 0 20 20" overflow="visible"><path d="M1 2.4 Q1 1 2.4 1 H8.6 L10.6 3.6 H18 Q19.2 3.6 19.2 4.8 V16 Q19.2 17.2 18 17.2 H2.2 Q1 17.2 1 16Z" fill="#fff" stroke="#a3a3a3" stroke-width="1"/><path d="M4.8 17 V7.4 Q4.8 6.4 5.8 6.4 H19" fill="none" stroke="#a3a3a3" stroke-width="1"/></svg><div class="trow" style="left:99px;top:222px">5 - Reference Documents</div><div class="exp p" style="left:53px;top:246px"><i></i><u></u></div><svg class="abs" style="left:73px;top:242px" width="20" height="20" viewBox="0 0 20 20" overflow="visible"><path d="M1 2.4 Q1 1 2.4 1 H8.6 L10.6 3.6 H18 Q19.2 3.6 19.2 4.8 V16 Q19.2 17.2 18 17.2 H2.2 Q1 17.2 1 16Z" fill="#fff" stroke="#a3a3a3" stroke-width="1"/><path d="M4.8 17 V7.4 Q4.8 6.4 5.8 6.4 H19" fill="none" stroke="#a3a3a3" stroke-width="1"/></svg><div class="trow" style="left:99px;top:242px">10 - SolidWorks</div><div class="exp p" style="left:30px;top:266px"><i></i><u></u></div><svg class="abs" style="left:50px;top:262px" width="20" height="20" viewBox="0 0 20 20" overflow="visible"><path d="M3 3.8 L12.6 -0.7 L13.2 0.9 L16.9 0.3 V14.6 L5.4 18.9 Q3 19.2 3 16.8 Z" fill="#0d9ae0"/><path d="M4.6 4.2 L13 0.9" stroke="#e8f6ff" stroke-width=".9" fill="none"/></svg><div class="trow" style="left:76px;top:262px">2 - Pallet Dispenser</div></div>
<div id="prev" class="abs"><svg class="abs" style="left:-6px;top:-368px" width="341" height="695" viewBox="0 0 341 695" font-family="Liberation Sans, sans-serif" shape-rendering="crispEdges"><path fill="#000" d="M14 462h319v1h-319zM174 461h159v2h-159zM15 462h1v200h-1zM331 462h2v201h-2zM15 661h318v1h-318zM11 468h4v5h-4zM13 476h1v1h-1zM11 483h4v4h-4zM13 491h1v1h-1zM11 497h4v5h-4zM13 506h1v1h-1zM11 512h4v5h-4zM13 520h1v1h-1zM11 527h4v4h-4zM13 535h1v1h-1zM11 541h4v5h-4zM13 550h1v1h-1zM11 556h4v5h-4zM13 564h1v1h-1zM11 571h4v4h-4zM13 579h1v1h-1zM11 585h4v5h-4zM13 594h1v1h-1zM11 600h4v5h-4zM13 608h1v1h-1zM11 614h4v5h-4zM13 623h1v1h-1zM11 629h4v5h-4zM13 637h1v1h-1zM11 644h4v4h-4zM13 652h1v1h-1zM11 634h4v28h-4zM14 462h2v200h-2zM17 474h4v3h-4zM15 640h318v1h-318zM102 640h1v22h-1zM15 657h216v1h-216zM231 640h1v15h-1zM237 640h1v15h-1zM252 640h1v15h-1zM267 640h1v15h-1zM231 655h1v7h-1zM317 640h1v22h-1zM281 655h1v7h-1zM231 644h87v1h-87zM231 647h87v1h-87zM231 651h87v1h-87zM231 655h87v1h-87zM231 652h7v3h-7zM242 652h6v3h-6zM257 652h6v3h-6zM283 652h11v3h-11zM231 655h11v3h-11zM319 641h11v2h-11zM319 652h10v3h-10zM103 657h10v2h-10z"/><path fill="#ff0000" d="M64 639h12v1h-12z"/><path fill="#000" d="M45 641h37v4h-37zM50 649h26v3h-26zM15 658h50v4h-50zM15 662h37v2h-37zM103 657h11v3h-11zM119 657h5v5h-5zM190 657h15v5h-15zM176 660h15v2h-15z"/><path fill="#ff0000" d="M37 639h44v1h-44z"/><path fill="#0000ff" d="M22 488h1v147h-1z"/><path fill="#ff0000" d="M27 489h1v146h-1z"/><path fill="#ff8000" d="M32 494h1v141h-1z"/><path fill="#800000" d="M37 499h1v136h-1z"/><path fill="#00ff00" d="M42 475h1v160h-1z"/><path fill="#ff0000" d="M27 489h118v1h-118z"/><path fill="#ff8000" d="M32 493h113v1h-113z"/><path fill="#800000" d="M37 498h108v1h-108z"/><path fill="#00ff00" d="M42 503h103v1h-103z"/><path fill="#ff0000" d="M27 511h118v1h-118z"/><path fill="#ff8000" d="M32 515h113v1h-113z"/><path fill="#800000" d="M37 520h108v1h-108z"/><path fill="#00ff00" d="M42 525h103v1h-103z"/><path fill="#ff0000" d="M27 535h118v1h-118z"/><path fill="#ff8000" d="M32 540h113v1h-113z"/><path fill="#800000" d="M37 545h108v1h-108z"/><path fill="#00ff00" d="M42 550h103v1h-103z"/><path fill="#ff0000" d="M27 596h242v1h-242z"/><path fill="#ff8000" d="M32 601h237v1h-237z"/><path fill="#800000" d="M37 606h232v1h-232z"/><path fill="#00ff00" d="M42 611h227v1h-227z"/><path fill="#800000" d="M203 569h27v1h-27zM202 569h1v37h-1z"/><path fill="#ff8000" d="M208 574h22v1h-22zM207 574h1v27h-1z"/><path fill="#ff0000" d="M213 579h17v1h-17zM212 579h1v17h-1zM240 569h24v1h-24zM263 569h1v27h-1z"/><path fill="#ff8000" d="M240 574h19v1h-19zM258 574h1v27h-1z"/><path fill="#800000" d="M240 579h14v1h-14zM254 579h1v27h-1z"/><path fill="#000" d="M24 468h16v3h-16zM25 472h10v1h-10zM22 475h3v2h-3zM22 486h3v3h-3z"/><path fill="#b40000" d="M22 476h1v1h-1zM22 486h1v1h-1z"/><path fill="#000" d="M27 475h2v2h-2zM27 486h2v3h-2z"/><path fill="#b40000" d="M27 476h1v1h-1zM27 486h1v1h-1z"/><path fill="#000" d="M32 475h2v2h-2zM32 486h2v3h-2z"/><path fill="#b40000" d="M32 476h1v1h-1zM32 486h1v1h-1z"/><path fill="#000" d="M37 475h2v2h-2zM37 486h2v3h-2z"/><path fill="#b40000" d="M36 476h2v1h-2zM36 486h2v1h-2z"/><path fill="#000" d="M18 481h22v1h-22z"/><path fill="#fff" d="M63 488h21v12h-21z"/><path fill="#000" d="M59 487h4v2h-4zM59 492h4v2h-4zM59 496h4v3h-4zM68 484h4v4h-4zM84 487h4v2h-4zM84 490h4v4h-4zM84 496h4v3h-4zM64 501h17v3h-17zM64 504h9v2h-9zM112 487h5v2h-5zM123 487h5v2h-5zM112 492h5v2h-5zM123 492h5v2h-5zM112 496h5v3h-5zM123 496h5v3h-5zM110 484h3v3h-3zM112 486h2v2h-2z"/><path fill="#fff" d="M118 487h4v15h-4z"/><path fill="#000" d="M118 487h1v15h-1zM121 487h1v15h-1zM117 502h18v2h-18zM117 504h13v3h-13zM140 484h4v3h-4zM144 487h1v20h-1zM146 485h2v3h-2zM146 490h2v3h-2zM146 495h2v3h-2zM146 500h2v2h-2z"/><path fill="#b8860b" d="M146 489h18v1h-18zM146 493h18v1h-18zM146 498h18v1h-18zM146 503h18v1h-18z"/><path fill="#ff0000" d="M151 489h9v3h-9zM151 494h9v3h-9zM151 499h9v2h-9zM151 504h8v3h-8z"/><path fill="#000" d="M164 487h2v2h-2zM164 492h2v3h-2zM164 496h2v3h-2zM164 502h2v2h-2zM166 504h5v1h-5zM179 484h3v3h-3zM183 489h7v13h-7zM183 489h15v5h-15zM196 490h2v3h-2zM183 496h13v3h-13zM188 495h9v2h-9z"/><path fill="#fff" d="M63 510h21v12h-21z"/><path fill="#000" d="M59 509h4v2h-4zM59 514h4v2h-4zM59 518h4v3h-4zM68 506h4v3h-4zM84 509h4v2h-4zM84 512h4v4h-4zM84 518h4v3h-4zM64 523h17v3h-17zM64 526h9v2h-9zM112 509h5v2h-5zM123 509h5v2h-5zM112 514h5v2h-5zM123 514h5v2h-5zM112 518h5v3h-5zM123 518h5v3h-5zM110 506h3v3h-3zM112 508h2v2h-2z"/><path fill="#fff" d="M118 509h4v14h-4z"/><path fill="#000" d="M118 509h1v14h-1zM121 509h1v14h-1zM117 523h18v3h-18zM117 526h13v3h-13zM140 506h4v3h-4zM144 509h1v20h-1zM146 507h2v3h-2zM146 512h2v3h-2zM146 517h2v3h-2zM146 522h2v2h-2z"/><path fill="#b8860b" d="M146 511h18v1h-18zM146 515h18v1h-18zM146 520h18v1h-18zM146 525h18v1h-18z"/><path fill="#ff0000" d="M151 511h9v3h-9zM151 516h9v3h-9zM151 521h9v2h-9zM151 526h8v3h-8z"/><path fill="#000" d="M164 509h2v2h-2zM164 514h2v3h-2zM164 518h2v3h-2zM164 523h2v3h-2zM166 525h5v1h-5zM179 506h3v3h-3zM183 511h7v13h-7zM183 511h15v5h-15zM196 512h2v3h-2zM183 518h13v3h-13zM188 517h9v2h-9z"/><path fill="#fff" d="M63 535h21v11h-21z"/><path fill="#000" d="M59 533h4v3h-4zM59 538h4v2h-4zM59 543h4v2h-4zM68 531h4v3h-4zM84 533h4v3h-4zM84 537h4v3h-4zM84 543h4v2h-4zM64 548h17v3h-17zM64 551h9v2h-9zM112 533h5v3h-5zM123 533h5v3h-5zM112 538h5v2h-5zM123 538h5v2h-5zM112 543h5v2h-5zM123 543h5v2h-5zM110 531h3v3h-3zM112 532h2v2h-2z"/><path fill="#fff" d="M118 533h4v15h-4z"/><path fill="#000" d="M118 533h1v15h-1zM121 533h1v15h-1zM117 548h18v3h-18zM117 551h13v2h-13zM140 530h4v4h-4zM144 533h1v20h-1zM146 531h2v3h-2zM146 536h2v3h-2zM146 541h2v3h-2zM146 546h2v3h-2z"/><path fill="#b8860b" d="M146 535h18v1h-18zM146 540h18v1h-18zM146 545h18v1h-18zM146 550h18v1h-18z"/><path fill="#ff0000" d="M151 535h9v3h-9zM151 540h9v3h-9zM151 545h9v3h-9zM151 550h8v3h-8z"/><path fill="#000" d="M164 533h2v3h-2zM164 538h2v4h-2zM164 542h2v3h-2zM164 548h2v2h-2zM166 550h5v1h-5zM179 531h3v3h-3zM183 536h7v12h-7zM183 536h15v5h-15zM196 536h2v4h-2zM183 542h13v3h-13zM188 542h9v1h-9z"/><path fill="#fff" d="M63 596h21v11h-21z"/><path fill="#000" d="M59 594h4v3h-4zM59 599h4v2h-4zM59 604h4v2h-4zM64 590h3v3h-3zM84 594h4v3h-4zM84 598h4v3h-4zM84 604h4v2h-4zM64 609h17v3h-17zM64 612h9v2h-9zM73 613h12v1h-12zM227 567h5v2h-5zM237 567h6v2h-6zM227 572h5v3h-5zM237 572h6v3h-6zM227 577h5v2h-5zM237 577h6v2h-6zM233 563h3v3h-3z"/><path fill="#fff" d="M233 567h4v15h-4z"/><path fill="#000" d="M233 567h1v15h-1zM235 567h1v15h-1zM232 582h17v3h-17zM232 585h12v3h-12zM227 594h5v3h-5zM237 594h6v3h-6zM227 599h5v2h-5zM237 599h6v2h-6zM227 604h5v2h-5zM237 604h6v2h-6zM232 589h3v3h-3z"/><path fill="#fff" d="M233 594h4v15h-4z"/><path fill="#000" d="M233 594h1v15h-1zM235 594h1v15h-1zM232 609h17v3h-17zM232 612h12v2h-12zM264 591h4v4h-4zM268 594h1v20h-1zM270 592h2v3h-2zM270 597h2v3h-2zM270 602h2v3h-2zM270 607h2v3h-2z"/><path fill="#b8860b" d="M270 596h11v1h-11zM270 601h11v1h-11zM270 606h11v1h-11zM270 611h11v1h-11z"/><path fill="#ff0000" d="M271 596h10v3h-10zM271 601h10v3h-10zM271 606h10v3h-10zM272 611h8v3h-8z"/><path fill="#000" d="M281 594h2v3h-2zM281 599h2v4h-2zM281 603h2v3h-2zM281 609h2v2h-2zM283 611h5v1h-5zM300 589h3v3h-3zM300 595h3v7h-3zM302 597h9v5h-9zM308 598h6v4h-6zM300 605h9v5h-9zM306 606h6v4h-6zM300 611h6v3h-6z"/><path fill="#00ff00" d="M64 503h3v1h-3zM68 503h3v1h-3zM72 503h3v1h-3zM77 503h2v1h-2zM64 525h3v1h-3zM68 525h3v1h-3zM72 525h3v1h-3zM77 525h2v1h-2zM64 550h3v1h-3zM68 550h3v1h-3zM72 550h3v1h-3zM77 550h2v1h-2zM64 611h3v1h-3zM68 611h3v1h-3zM72 611h3v1h-3zM77 611h2v1h-2zM117 503h3v1h-3zM121 503h3v1h-3zM126 503h2v1h-2zM130 503h3v1h-3zM117 525h3v1h-3zM121 525h3v1h-3zM126 525h2v1h-2zM130 525h3v1h-3zM117 550h3v1h-3zM121 550h3v1h-3zM126 550h2v1h-2zM130 550h3v1h-3zM232 611h2v1h-2zM236 611h2v1h-2zM240 611h3v1h-3zM244 611h3v1h-3z"/><path fill="#ff0000" d="M66 487h1v11h-1zM66 509h1v11h-1zM66 533h1v11h-1zM66 595h1v9h-1z"/><path fill="#000" d="M22 477h1v2h-1zM22 479h2v1h-2zM22 483h1v3h-1zM27 477h1v2h-1zM27 479h2v1h-2zM27 483h1v3h-1zM32 477h1v2h-1zM32 479h2v1h-2zM32 483h1v3h-1zM37 477h1v2h-1zM36 479h2v1h-2zM37 483h1v3h-1z"/><path fill="#ff66ff" d="M27 488h1v2h-1zM32 493h1v2h-1zM36 498h2v1h-2zM41 503h2v1h-2zM27 510h1v2h-1zM32 515h1v1h-1zM36 520h2v1h-2zM41 525h2v1h-2zM27 535h1v1h-1zM32 540h1v1h-1zM36 544h2v2h-2zM41 549h2v2h-2zM27 596h1v1h-1zM32 601h1v1h-1zM36 605h2v2h-2zM41 610h2v2h-2zM202 605h1v2h-1zM207 601h1v1h-1zM212 596h1v1h-1zM263 596h1v1h-1zM258 601h1v1h-1zM253 605h2v2h-2z"/><polyline points="63.1,488.3 63.7,489.6 64.8,488.3 65.5,487.5 67.6,487.5 68.9,489.3 69.9,488.6 71.5,488.2 72.2,487.5 73.4,487.5 73.9,488.9 72.4,490.9" fill="none" stroke="#000" stroke-width="1"/><polyline points="74.9,487.5 73.4,490.1 75.7,490.9 76.2,489.1 79.6,488.2 82.7,490.1 83.7,489.1" fill="none" stroke="#000" stroke-width="1"/><polyline points="63.1,493.2 63.7,494.5 64.8,493.2 65.5,492.3 67.6,492.3 68.9,494.1 69.9,493.5 71.5,493.1 72.2,492.3 73.4,492.3 73.9,493.8 72.4,495.8" fill="none" stroke="#000" stroke-width="1"/><polyline points="74.9,492.3 73.4,495.0 75.7,495.8 76.2,493.9 79.6,493.1 82.7,495.0 83.7,493.9" fill="none" stroke="#000" stroke-width="1"/><polyline points="63.1,498.1 63.7,499.4 64.8,498.1 65.5,497.2 67.6,497.2 68.9,499.0 69.9,498.4 71.5,498.0 72.2,497.2 73.4,497.2 73.9,498.6 72.4,500.6" fill="none" stroke="#000" stroke-width="1"/><polyline points="74.9,497.2 73.4,499.9 75.7,500.6 76.2,498.8 79.6,498.0 82.7,499.9 83.7,498.8" fill="none" stroke="#000" stroke-width="1"/><polyline points="63.1,510.3 63.7,511.6 64.8,510.3 65.5,509.4 67.6,509.4 68.9,511.2 69.9,510.6 71.5,510.2 72.2,509.4 73.4,509.4 73.9,510.8 72.4,512.8" fill="none" stroke="#000" stroke-width="1"/><polyline points="74.9,509.4 73.4,512.1 75.7,512.8 76.2,511.0 79.6,510.2 82.7,512.1 83.7,511.0" fill="none" stroke="#000" stroke-width="1"/><polyline points="63.1,515.1 63.7,516.5 64.8,515.1 65.5,514.3 67.6,514.3 68.9,516.1 69.9,515.5 71.5,515.1 72.2,514.3 73.4,514.3 73.9,515.7 72.4,517.7" fill="none" stroke="#000" stroke-width="1"/><polyline points="74.9,514.3 73.4,516.9 75.7,517.7 76.2,515.9 79.6,515.1 82.7,516.9 83.7,515.9" fill="none" stroke="#000" stroke-width="1"/><polyline points="63.1,520.0 63.7,521.4 64.8,520.0 65.5,519.2 67.6,519.2 68.9,521.0 69.9,520.3 71.5,519.9 72.2,519.2 73.4,519.2 73.9,520.6 72.4,522.6" fill="none" stroke="#000" stroke-width="1"/><polyline points="74.9,519.2 73.4,521.8 75.7,522.6 76.2,520.8 79.6,519.9 82.7,521.8 83.7,520.8" fill="none" stroke="#000" stroke-width="1"/><polyline points="63.1,534.6 63.7,536.0 64.8,534.6 65.5,533.8 67.6,533.8 68.9,535.6 69.9,535.0 71.5,534.6 72.2,533.8 73.4,533.8 73.9,535.2 72.4,537.2" fill="none" stroke="#000" stroke-width="1"/><polyline points="74.9,533.8 73.4,536.4 75.7,537.2 76.2,535.4 79.6,534.6 82.7,536.4 83.7,535.4" fill="none" stroke="#000" stroke-width="1"/><polyline points="63.1,539.5 63.7,540.9 64.8,539.5 65.5,538.7 67.6,538.7 68.9,540.5 69.9,539.8 71.5,539.5 72.2,538.7 73.4,538.7 73.9,540.1 72.4,542.1" fill="none" stroke="#000" stroke-width="1"/><polyline points="74.9,538.7 73.4,541.3 75.7,542.1 76.2,540.3 79.6,539.5 82.7,541.3 83.7,540.3" fill="none" stroke="#000" stroke-width="1"/><polyline points="63.1,544.4 63.7,545.8 64.8,544.4 65.5,543.6 67.6,543.6 68.9,545.4 69.9,544.7 71.5,544.3 72.2,543.6 73.4,543.6 73.9,545.0 72.4,547.0" fill="none" stroke="#000" stroke-width="1"/><polyline points="74.9,543.6 73.4,546.2 75.7,547.0 76.2,545.2 79.6,544.3 82.7,546.2 83.7,545.2" fill="none" stroke="#000" stroke-width="1"/><polyline points="63.1,595.6 63.7,597.0 64.8,595.6 65.5,594.8 67.6,594.8 68.9,596.6 69.9,596.0 71.5,595.6 72.2,594.8 73.4,594.8 73.9,596.2 72.4,598.2" fill="none" stroke="#000" stroke-width="1"/><polyline points="74.9,594.8 73.4,597.4 75.7,598.2 76.2,596.4 79.6,595.6 82.7,597.4 83.7,596.4" fill="none" stroke="#000" stroke-width="1"/><polyline points="63.1,600.5 63.7,601.9 64.8,600.5 65.5,599.7 67.6,599.7 68.9,601.5 69.9,600.8 71.5,600.4 72.2,599.7 73.4,599.7 73.9,601.1 72.4,603.1" fill="none" stroke="#000" stroke-width="1"/><polyline points="74.9,599.7 73.4,602.3 75.7,603.1 76.2,601.3 79.6,600.4 82.7,602.3 83.7,601.3" fill="none" stroke="#000" stroke-width="1"/><polyline points="63.1,605.4 63.7,606.7 64.8,605.4 65.5,604.6 67.6,604.6 68.9,606.4 69.9,605.7 71.5,605.3 72.2,604.6 73.4,604.6 73.9,606.0 72.4,608.0" fill="none" stroke="#000" stroke-width="1"/><polyline points="74.9,604.6 73.4,607.2 75.7,608.0 76.2,606.2 79.6,605.3 82.7,607.2 83.7,606.2" fill="none" stroke="#000" stroke-width="1"/><polyline points="19.9,479.5 23.1,483.7" fill="none" stroke="#000" stroke-width="1"/><polyline points="19.7,482.6 21.3,480.4" fill="none" stroke="#000" stroke-width="1"/><polyline points="24.4,479.5 27.7,483.7" fill="none" stroke="#000" stroke-width="1"/><polyline points="24.3,482.6 25.9,480.4" fill="none" stroke="#000" stroke-width="1"/><polyline points="29.5,479.5 32.7,483.7" fill="none" stroke="#000" stroke-width="1"/><polyline points="29.3,482.6 30.9,480.4" fill="none" stroke="#000" stroke-width="1"/><polyline points="34.2,479.5 37.4,483.7" fill="none" stroke="#000" stroke-width="1"/><polyline points="34.0,482.6 35.6,480.4" fill="none" stroke="#000" stroke-width="1"/><line x1="120.3" y1="487.1" x2="120.3" y2="501.1" stroke="#000" stroke-width="1" stroke-dasharray="1.3 1.6"/><line x1="120.3" y1="509.1" x2="120.3" y2="523.1" stroke="#000" stroke-width="1" stroke-dasharray="1.3 1.6"/><line x1="120.3" y1="533.5" x2="120.3" y2="547.5" stroke="#000" stroke-width="1" stroke-dasharray="1.3 1.6"/><circle cx="144.8" cy="489.1" r="1.0" fill="#fff" stroke="#000" stroke-width="1"/><circle cx="144.8" cy="493.9" r="1.0" fill="#fff" stroke="#000" stroke-width="1"/><circle cx="144.8" cy="498.8" r="1.0" fill="#fff" stroke="#000" stroke-width="1"/><circle cx="144.8" cy="503.7" r="1.0" fill="#fff" stroke="#000" stroke-width="1"/><circle cx="173.6" cy="493.8" r="7.0" fill="#fff" stroke="#000" stroke-width="1"/><polyline points="171.3,504.0 172.3,500.3" fill="none" stroke="#000" stroke-width="1"/><text x="173.6" y="494.6" font-size="4.8" fill="#8aa0c0" text-anchor="middle" font-weight="normal">M</text><circle cx="144.8" cy="511.0" r="1.0" fill="#fff" stroke="#000" stroke-width="1"/><circle cx="144.8" cy="515.9" r="1.0" fill="#fff" stroke="#000" stroke-width="1"/><circle cx="144.8" cy="520.8" r="1.0" fill="#fff" stroke="#000" stroke-width="1"/><circle cx="144.8" cy="525.7" r="1.0" fill="#fff" stroke="#000" stroke-width="1"/><circle cx="173.6" cy="515.8" r="7.0" fill="#fff" stroke="#000" stroke-width="1"/><polyline points="171.3,526.0 172.3,522.3" fill="none" stroke="#000" stroke-width="1"/><text x="173.6" y="516.5" font-size="4.8" fill="#8aa0c0" text-anchor="middle" font-weight="normal">M</text><circle cx="144.8" cy="535.4" r="1.0" fill="#fff" stroke="#000" stroke-width="1"/><circle cx="144.8" cy="540.3" r="1.0" fill="#fff" stroke="#000" stroke-width="1"/><circle cx="144.8" cy="545.2" r="1.0" fill="#fff" stroke="#000" stroke-width="1"/><circle cx="144.8" cy="550.1" r="1.0" fill="#fff" stroke="#000" stroke-width="1"/><circle cx="173.6" cy="540.2" r="7.0" fill="#fff" stroke="#000" stroke-width="1"/><polyline points="171.3,550.4 172.3,546.7" fill="none" stroke="#000" stroke-width="1"/><text x="173.6" y="540.9" font-size="4.8" fill="#8aa0c0" text-anchor="middle" font-weight="normal">M</text><circle cx="268.9" cy="596.4" r="1.0" fill="#fff" stroke="#000" stroke-width="1"/><circle cx="268.9" cy="601.3" r="1.0" fill="#fff" stroke="#000" stroke-width="1"/><circle cx="268.9" cy="606.2" r="1.0" fill="#fff" stroke="#000" stroke-width="1"/><circle cx="268.9" cy="611.0" r="1.0" fill="#fff" stroke="#000" stroke-width="1"/><circle cx="290.6" cy="601.2" r="7.0" fill="#fff" stroke="#000" stroke-width="1"/><polyline points="288.4,611.4 289.3,607.6" fill="none" stroke="#000" stroke-width="1"/><text x="290.6" y="601.9" font-size="4.8" fill="#8aa0c0" text-anchor="middle" font-weight="normal">M</text><text x="141.7" y="644.9" font-size="4.8" fill="#000" text-anchor="start" font-weight="normal" textLength="50.9" lengthAdjust="spacingAndGlyphs">Power - Packaging Line</text></svg></div>
</div>
<!-- ================= CONTEXT MENU ================= -->
<div class="menu" style="left:205px;top:216px;width:238px;height:474px"><div class="strip" style="width:34px"></div><div class="mi" style="top:2px"><svg class="ic" style="left:-1px;top:0px" width="36" height="28" viewBox="0 0 36 28"><g transform="translate(-1.5,-2.5)"><path d="M8.7 10.6 Q8.7 9.7 9.6 9.7 H15.6 L17.4 11.6 H23.4 Q24.3 11.6 24.3 12.5 V22.2 Q24.3 23 23.4 23 H9.6 Q8.7 23 8.7 22.2Z" fill="#fdfdfd" stroke="#9b9b9b" stroke-width="1.1"/><path d="M11.6 22.8 V14.6 Q11.6 13.8 12.4 13.8 H24" fill="none" stroke="#9b9b9b" stroke-width="1.1"/><path d="M28.2 17.8 H19.2 M22.6 14.2 L18.8 17.8 L22.6 21.4" fill="none" stroke="#1e9ad6" stroke-width="1.8" stroke-linejoin="miter"/></g></svg><span class="t" style="letter-spacing:-0.25px">Close</span></div><div class="mi" style="top:30px"><svg class="ic" style="left:-1px;top:0px" width="36" height="28" viewBox="0 0 36 28"><path d="M10.2 5.4 Q10.4 4.3 11.6 4.3 H21.6 Q22.8 4.3 22.8 5.5 V21.4" fill="none" stroke="#4cc3ef" stroke-width="1.2"/><path d="M8.5 5.6 H16.6 L20.8 9.8 V22.4 Q20.8 23.5 19.7 23.5 H8.5 Q7.4 23.5 7.4 22.4 V6.7 Q7.4 5.6 8.5 5.6Z" fill="#fff" stroke="#25aee6" stroke-width="1.3"/><path d="M16.4 5.8 V9 Q16.4 10 17.4 10 H20.6" fill="none" stroke="#25aee6" stroke-width="1.1"/><circle cx="18.5" cy="15.7" r="4.1" fill="#fff" fill-opacity=".85" stroke="#4a46d2" stroke-width="1.25"/><path d="M21.5 18.7 L26.8 23.6" stroke="#4a46d2" stroke-width="1.45"/></svg><span class="t" style="letter-spacing:-0.23px">Preview...</span></div><div class="mi" style="top:58px"><span class="t" style="letter-spacing:0.36px">New</span><div class="arr" style="left:215px;top:9px"></div></div><div class="mi" style="top:86px"><span class="t" style="letter-spacing:0.24px">Insert (before)</span><div class="arr" style="left:215px;top:9px"></div></div><div class="mi" style="top:114px"><svg class="ic" style="left:-1px;top:0px" width="36" height="28" viewBox="0 0 36 28"><g transform="translate(-1.9,-0.1)"><circle cx="16.6" cy="15.6" r="7.5" fill="#1e9ad6"/><rect x="15.3" y="14" width="2.7" height="6.6" rx=".6" fill="#fff"/><circle cx="16.65" cy="11.3" r="1.6" fill="#fff"/><path d="M19.6 14.4 L27.2 6.8 L28.8 8.6 L21 16Z" fill="#f4f4f4" stroke="#a8a8a8" stroke-width=".8"/><path d="M19.6 14.4 L19 16.6 L21 16Z" fill="#555"/></g></svg><span class="t" style="letter-spacing:-0.11px">Properties...</span><span class="k" style="left:141.5px">Ctrl+Enter</span></div><div class="mi" style="top:142px"><svg class="ic" style="left:-1px;top:0px" width="36" height="28" viewBox="0 0 36 28"><g transform="translate(-1.9,-2)"><rect x="9" y="7.4" width="12.6" height="16" rx="1.2" fill="#3c3c3c"/><rect x="13.6" y="6.4" width="5" height="2.6" rx="1" fill="#8a8a8a"/><path d="M15 10 H25.4 Q26.2 10 26.2 10.8 V24.4 Q26.2 25.2 25.4 25.2 H14.8 Q14 25.2 14 24.4 V11 Z" fill="#fdfdfd" stroke="#a0a0a0" stroke-width=".9"/><path d="M16.6 18.6 L20.2 22.6 L28.2 13.6" fill="none" stroke="#5bb030" stroke-width="2.7"/></g></svg><span class="t" style="letter-spacing:-0.37px">Revisions...</span></div><div class="mi" style="top:170px"><svg class="ic" style="left:-1px;top:0px" width="36" height="28" viewBox="0 0 36 28"><g transform="translate(0.2,0.5)"><path d="M9.7 13.6 Q9.6 9 13.6 9 H22.6 M18.3 4.8 L22.9 9 L18.3 13.2" fill="none" stroke="#1e9ad6" stroke-width="1.9"/><path d="M24.4 14.6 Q24.5 19.4 20.6 19.5 H11.4 M15.8 15.3 L11.1 19.5 L15.8 23.8" fill="none" stroke="#1e9ad6" stroke-width="1.9"/></g></svg><span class="t" style="letter-spacing:0.20px">Rebuild</span></div><div class="sep" style="top:199px"></div><div class="mi" style="top:202px"><svg class="ic" style="left:-1px;top:0px" width="36" height="28" viewBox="0 0 36 28"><g transform="translate(-1.9,-2.1)"><polygon points="8.7,10 11.6,6.2 28.6,6.2 25.8,10" fill="#cfcfcf"/><polygon points="25.8,10 28.6,6.2 28.6,21.6 25.8,25.2" fill="#8f8f8f"/><rect x="8.7" y="10" width="17.1" height="15.2" fill="#b4b4b4"/><rect x="17" y="10" width=".8" height="15.2" fill="#a2a2a2"/><rect x="15.2" y="16" width="1" height="3.4" fill="#8c8c8c"/><rect x="18.6" y="16" width="1" height="3.4" fill="#8c8c8c"/></g></svg><span class="t" style="letter-spacing:0.08px">Change location...</span></div><div class="mi" style="top:230px"><svg class="ic" style="left:-1px;top:0px" width="36" height="28" viewBox="0 0 36 28"><g transform="translate(-1.75,-2.2)"><circle cx="18.3" cy="12.6" r="1.3" fill="#8cc152"/><circle cx="17.2" cy="15.2" r="1.3" fill="#8cc152"/><circle cx="14.6" cy="16.3" r="1.3" fill="#8cc152"/><circle cx="12.0" cy="15.2" r="1.3" fill="#8cc152"/><circle cx="10.9" cy="12.6" r="1.3" fill="#8cc152"/><circle cx="12.0" cy="10.0" r="1.3" fill="#8cc152"/><circle cx="14.6" cy="8.9" r="1.3" fill="#8cc152"/><circle cx="17.2" cy="10.0" r="1.3" fill="#8cc152"/><circle cx="14.6" cy="12.6" r="3.7" fill="#8cc152"/><circle cx="27.1" cy="19.6" r="1.8" fill="#f5a21c"/><circle cx="25.7" cy="23.1" r="1.8" fill="#f5a21c"/><circle cx="22.2" cy="24.5" r="1.8" fill="#f5a21c"/><circle cx="18.7" cy="23.1" r="1.8" fill="#f5a21c"/><circle cx="17.3" cy="19.6" r="1.8" fill="#f5a21c"/><circle cx="18.7" cy="16.1" r="1.8" fill="#f5a21c"/><circle cx="22.2" cy="14.7" r="1.8" fill="#f5a21c"/><circle cx="25.7" cy="16.1" r="1.8" fill="#f5a21c"/><circle cx="22.2" cy="19.6" r="4.9" fill="#f5a21c"/><rect x="13.4" y="4.6" width="2.6" height="7" fill="#8a8a8a"/><rect x="20.8" y="10.6" width="2.8" height="8.4" fill="#8a8a8a"/></g></svg><span class="t" style="letter-spacing:0.04px">Change function...</span></div><div class="sep" style="top:259px"></div><div class="mi" style="top:262px"><svg class="ic" style="left:-1px;top:0px" width="36" height="28" viewBox="0 0 36 28"><path d="M13.6 7.6 H20.5 Q22 7.6 22 9 V21.6 Q22 22.8 20.8 22.8 H11.8 Q10.6 22.8 10.6 21.6 V10.6 Q10.6 7.6 13.6 7.6Z" fill="#fdfdfd" stroke="#a0a0a0" stroke-width="1"/><circle cx="12.8" cy="9.9" r="1.1" fill="#fdfdfd" stroke="#b8b8b8" stroke-width=".7"/><polygon points="21.2,5.7 22.4,8.8 25.7,8.9 23.1,11.0 24.0,14.2 21.2,12.4 18.4,14.2 19.3,11.0 16.7,8.9 20.0,8.8" fill="#fbbc05"/><polygon points="11.1,12.9 12.2,15.9 15.5,16.1 12.9,18.1 13.8,21.2 11.1,19.4 8.4,21.2 9.3,18.1 6.7,16.1 10.0,15.9" fill="#fde512"/><g transform="rotate(36 11.1 17.5)"><polygon points="11.1,13.3 12.1,16.1 15.1,16.2 12.8,18.0 13.6,20.9 11.1,19.3 8.6,20.9 9.4,18.0 7.1,16.2 10.1,16.1" fill="#fde512"/></g></svg><span class="t" style="letter-spacing:0.14px">Create project macro...</span></div><div class="sep" style="top:291px"></div><div class="mi" style="top:294px"><svg class="ic" style="left:-1px;top:0px" width="36" height="28" viewBox="0 0 36 28"><path d="M7.3 20.2 V8.9 Q7.3 8.1 8.1 8.1 H13 L15.6 10 H18" fill="none" stroke="#9b9b9b" stroke-width="1.1"/><path d="M7.3 20.2 Q9.6 20.2 10.6 17.6 L12.4 13.8 Q12.9 12.9 14 12.9 H26 L22.8 19.6 Q22.5 20.2 21.8 20.2 Z" fill="#fdfdfd" stroke="#9b9b9b" stroke-width="1.1"/><circle cx="20.4" cy="11.3" r="3.1" fill="#fff" stroke="#2a9edb" stroke-width="1.2"/><path d="M22.7 13.6 L26.8 17.8" stroke="#2a9edb" stroke-width="1.4"/></svg><span class="t" style="letter-spacing:-0.04px">Reach a drawing...</span></div><div class="mi hl" style="top:322px"><span class="t" style="letter-spacing:0.49px">Title block</span><div class="arr" style="left:214px;top:8px"></div></div><div class="sep" style="top:351px"></div><div class="mi" style="top:354px"><svg class="ic" style="left:-1px;top:0px" width="36" height="28" viewBox="0 0 36 28"><path d="M12.9 19 L22.6 5.2 M10.4 14.8 L27 13.6" fill="none" stroke="#3a3a3a" stroke-width="1.2"/><circle cx="8.9" cy="14.9" r="1.6" fill="none" stroke="#e01b22" stroke-width="1.2"/><circle cx="12.1" cy="20.3" r="1.6" fill="none" stroke="#e01b22" stroke-width="1.2"/></svg><span class="t" style="letter-spacing:-0.08px">Cut</span><span class="k" style="left:166px">Ctrl+X</span></div><div class="mi" style="top:382px"><svg class="ic" style="left:-1px;top:0px" width="36" height="28" viewBox="0 0 36 28"><path d="M9 4.2 h5.3 l3.6 3.6 v12.1 q0 .8 -.8 .8 h-8.1 q-.8 0 -.8 -.8 v-14.9 q0 -.8 .8 -.8z" fill="#fdfdfd" stroke="#8c8c8c" stroke-width="1"/><path d="M14.3 4.6 v3.2 h3.2" fill="none" stroke="#8c8c8c" stroke-width=".8"/><path d="M10.4 12.45 h5.3" stroke="#d0d0d0" stroke-width=".8" fill="none"/><path d="M10.4 14.85 h5.3" stroke="#d0d0d0" stroke-width=".8" fill="none"/><path d="M10.4 17.25 h5.3" stroke="#d0d0d0" stroke-width=".8" fill="none"/><path d="M14.8 7.4 h7.4 l3.6 3.6 v11.9 q0 .8 -.8 .8 h-10.2 q-.8 0 -.8 -.8 v-14.7 q0 -.8 .8 -.8z" fill="#fdfdfd" stroke="#8c8c8c" stroke-width="1"/><path d="M22.2 7.8 v3.2 h3.2" fill="none" stroke="#8c8c8c" stroke-width=".8"/><path d="M16.2 15.55 h7.4" stroke="#d0d0d0" stroke-width=".8" fill="none"/><path d="M16.2 17.95 h7.4" stroke="#d0d0d0" stroke-width=".8" fill="none"/><path d="M16.2 20.35 h7.4" stroke="#d0d0d0" stroke-width=".8" fill="none"/></svg><span class="t" style="letter-spacing:0.15px">Copy</span><span class="k" style="left:166px">Ctrl+C</span></div><div class="mi dis" style="top:410px"><svg class="ic" style="left:-1px;top:0px" width="36" height="28" viewBox="0 0 36 28"><rect x="8.5" y="5.4" width="12.5" height="16.4" rx="1" fill="#b4b4b4"/><rect x="12.4" y="4.2" width="5" height="2.4" rx="1" fill="#c8c8c8"/><path d="M13.8 6.2 h8.4 l3.6 3.6 v12.9 q0 .8 -.8 .8 h-11.2 q-.8 0 -.8 -.8 v-15.7 q0 -.8 .8 -.8z" fill="#ececec" stroke="#c6c6c6" stroke-width="1"/><path d="M22.2 6.6 v3.2 h3.2" fill="none" stroke="#c6c6c6" stroke-width=".8"/><path d="M15.2 14.85 h8.4" stroke="#dadada" stroke-width=".8" fill="none"/><path d="M15.2 17.25 h8.4" stroke="#dadada" stroke-width=".8" fill="none"/><path d="M15.2 19.65 h8.4" stroke="#dadada" stroke-width=".8" fill="none"/></svg><span class="t" style="letter-spacing:-0.51px">Paste</span><span class="k" style="left:166px">Ctrl+V</span></div><div class="sep" style="top:439px"></div><div class="mi" style="top:442px"><svg class="ic" style="left:-1px;top:0px" width="36" height="28" viewBox="0 0 36 28"><path d="M11.5 8.4 L23 19.9 M23 8.4 L11.5 19.9" fill="none" stroke="#e3342a" stroke-width="3.6"/></svg><span class="t" style="letter-spacing:-0.03px">Delete...</span><span class="k" style="left:185.5px">Del</span></div></div>
<div class="menu" style="left:441px;top:539px;width:190px;height:146px"><div class="strip" style="width:34px"></div><div class="mi" style="top:2px"><svg class="ic" style="left:-1px;top:0px" width="36" height="28" viewBox="0 0 36 28"><g transform="translate(0,-0.4)"><path d="M9.7 13.6 Q9.6 9 13.6 9 H22.6 M18.3 4.8 L22.9 9 L18.3 13.2" fill="none" stroke="#5bb030" stroke-width="1.9"/><path d="M24.4 14.6 Q24.5 19.4 20.6 19.5 H11.4 M15.8 15.3 L11.1 19.5 L15.8 23.8" fill="none" stroke="#5bb030" stroke-width="1.9"/></g></svg><span class="t" style="letter-spacing:-0.03px">Update...</span></div><div class="mi hl" style="top:30px"><svg class="ic" style="left:-2px;top:-1px" width="36" height="28" viewBox="0 0 36 28"><g transform="translate(-0.5,0)"><circle cx="15" cy="10.8" r="6.3" fill="#fdfdfd" stroke="#4a4a4a" stroke-width="1.3"/><path d="M19.6 15.4 L27 23.2" stroke="#4a4a4a" stroke-width="1.7"/></g></svg><span class="t" style="letter-spacing:-0.33px">Replace...</span></div><div class="mi" style="top:58px"><svg class="ic" style="left:-1px;top:0px" width="36" height="28" viewBox="0 0 36 28"><g transform="translate(-0.1,0)"><path d="M11.5 8.4 L23 19.9 M23 8.4 L11.5 19.9" fill="none" stroke="#e3342a" stroke-width="3.6"/></g></svg><span class="t" style="letter-spacing:-0.31px">Remove...</span></div><div class="mi" style="top:86px"><svg class="ic" style="left:-1px;top:0px" width="36" height="28" viewBox="0 0 36 28"><g transform="translate(-0.6,-0.6)"><path d="M21.6 6.4 L27.4 11.4 L13.6 21.6 L9.4 22.8 L11.4 18Z" fill="#fdfdfd" stroke="#29abe2" stroke-width="1.1" stroke-linejoin="round"/><path d="M11.4 18 L13.6 21.6" stroke="#29abe2" stroke-width="1"/><path d="M14.6 15.8 L20.4 11.6 M15.8 17.2 L21.6 13" stroke="#8fd0f0" stroke-width=".9"/><path d="M8 23.8 L9.2 20.6 L11.2 22.6Z" fill="#2030c0"/></g></svg><span class="t" style="letter-spacing:-0.33px">Open...</span></div><div class="mi" style="top:114px"><svg class="ic" style="left:-1px;top:0px" width="36" height="28" viewBox="0 0 36 28"><g transform="translate(-0.8,-1.3)"><path d="M17.8 8.4 V22 M11 15.2 H24.6" stroke="#5bb030" stroke-width="2.7" fill="none"/></g></svg><span class="t" style="letter-spacing:0.32px">Add to library...</span></div></div>
</body>
</html>
